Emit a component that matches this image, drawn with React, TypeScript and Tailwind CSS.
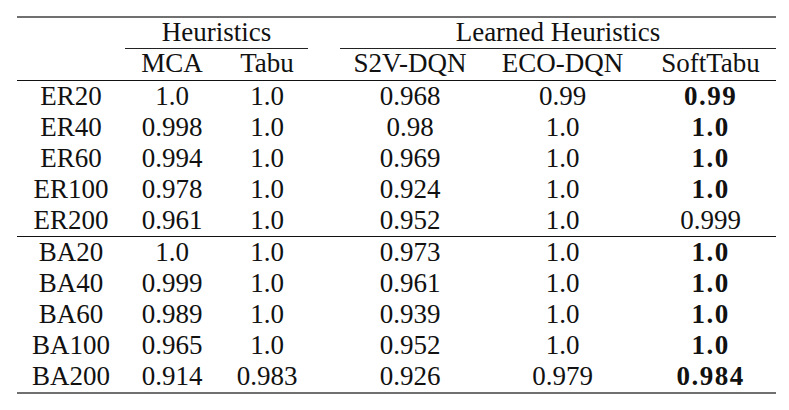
const widths = ['w-[108px]', 'w-[94px]', 'w-[96px]', 'w-[25px]', 'w-[140px]', 'w-[165px]', 'w-[131px]'];

type Row = { name: string; vals: string[]; bold?: boolean };

const erRows: Row[] = [
  { name: 'ER20', vals: ['1.0', '1.0', '0.968', '0.99', '0.99'], bold: true },
  { name: 'ER40', vals: ['0.998', '1.0', '0.98', '1.0', '1.0'], bold: true },
  { name: 'ER60', vals: ['0.994', '1.0', '0.969', '1.0', '1.0'], bold: true },
  { name: 'ER100', vals: ['0.978', '1.0', '0.924', '1.0', '1.0'], bold: true },
  { name: 'ER200', vals: ['0.961', '1.0', '0.952', '1.0', '0.999'] },
];

const baRows: Row[] = [
  { name: 'BA20', vals: ['1.0', '1.0', '0.973', '1.0', '1.0'], bold: true },
  { name: 'BA40', vals: ['0.999', '1.0', '0.961', '1.0', '1.0'], bold: true },
  { name: 'BA60', vals: ['0.989', '1.0', '0.939', '1.0', '1.0'], bold: true },
  { name: 'BA100', vals: ['0.965', '1.0', '0.952', '1.0', '1.0'], bold: true },
  { name: 'BA200', vals: ['0.914', '0.983', '0.926', '0.979', '0.984'], bold: true },
];

function DataRow({ row }: { row: Row }) {
  const cells = [row.name, row.vals[0], row.vals[1], '', row.vals[2], row.vals[3], row.vals[4]];
  return (
    <div className="flex h-[31px] leading-[31px]">
      {cells.map((c, i) => (
        <div
          key={i}
          className={`${widths[i]} text-center ${i === 6 && row.bold ? 'font-bold tracking-[1.5px]' : ''}`}
        >
          {c}
        </div>
      ))}
    </div>
  );
}

export default function App() {
  return (
    <div className="w-[789px] h-[410px] bg-white text-[#111] text-[27px] font-['Liberation_Serif','Times_New_Roman',serif]">
      <div className="pl-[17px] pt-[16px] w-[776px]">
        <div className="h-[2px] bg-[#707070]" />

        {/* group header */}
        <div className="flex h-[30px] leading-[28px]">
          <div className="w-[108px]" />
          <div className="w-[183px] text-center">Heuristics</div>
          <div className="w-[32px]" />
          <div className="w-[436px] text-center">Learned Heuristics</div>
        </div>
        <div className="flex h-px">
          <div className="w-[108px]" />
          <div className="w-[183px] bg-[#222]" />
          <div className="w-[32px]" />
          <div className="w-[436px] bg-[#222]" />
        </div>

        {/* column header */}
        <div className="flex h-[31px] leading-[28px]">
          {['', 'MCA', 'Tabu', '', 'S2V-DQN', 'ECO-DQN', 'SoftTabu'].map((h, i) => (
            <div key={i} className={`${widths[i]} text-center`}>
              {h}
            </div>
          ))}
        </div>
        <div className="h-px bg-[#111]" />

        {erRows.map((r) => (
          <DataRow key={r.name} row={r} />
        ))}
        <div className="h-px bg-[#111]" />
        {baRows.map((r) => (
          <DataRow key={r.name} row={r} />
        ))}
        <div className="h-[2px] bg-[#707070]" />
      </div>
    </div>
  );
}
